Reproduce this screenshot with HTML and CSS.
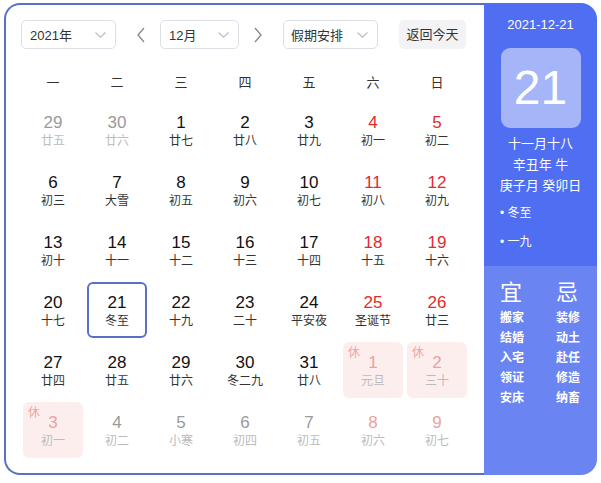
FILE: index.html
```html
<!DOCTYPE html>
<html lang="zh-CN">
<head>
<meta charset="utf-8">
<link rel="stylesheet" href="styles.css">
</head>
<body>
<div class="card">
  <div class="main">
    <div class="controls">
      <div class="select sel-year"><span>2021年</span><svg class="chev" width="11" height="6" viewBox="0 0 11 6"><polyline points="0.5,0.5 5.5,5.2 10.5,0.5" fill="none" stroke="#b8bcc4" stroke-width="1.1"/></svg></div>
      <svg class="arrow arrow-l" width="10" height="16" viewBox="0 0 10 16"><polyline points="8,1 2,8 8,15" fill="none" stroke="#888" stroke-width="1.3"/></svg>
      <div class="select sel-month"><span>12月</span><svg class="chev" width="11" height="6" viewBox="0 0 11 6"><polyline points="0.5,0.5 5.5,5.2 10.5,0.5" fill="none" stroke="#b8bcc4" stroke-width="1.1"/></svg></div>
      <svg class="arrow arrow-r" width="10" height="16" viewBox="0 0 10 16"><polyline points="2,1 8,8 2,15" fill="none" stroke="#888" stroke-width="1.3"/></svg>
      <div class="select sel-hol"><span>假期安排</span><svg class="chev" width="11" height="6" viewBox="0 0 11 6"><polyline points="0.5,0.5 5.5,5.2 10.5,0.5" fill="none" stroke="#b8bcc4" stroke-width="1.1"/></svg></div>
      <div class="btn">返回今天</div>
    </div>
    <div class="weekdays">
      <span>一</span><span>二</span><span>三</span><span>四</span><span>五</span><span>六</span><span>日</span>
    </div>
    <div class="grid">
      <div class="cell other"><b>29</b><i>廿五</i></div>
      <div class="cell other"><b>30</b><i>廿六</i></div>
      <div class="cell"><b>1</b><i>廿七</i></div>
      <div class="cell"><b>2</b><i>廿八</i></div>
      <div class="cell"><b>3</b><i>廿九</i></div>
      <div class="cell wk"><b>4</b><i>初一</i></div>
      <div class="cell wk"><b>5</b><i>初二</i></div>

      <div class="cell"><b>6</b><i>初三</i></div>
      <div class="cell"><b>7</b><i>大雪</i></div>
      <div class="cell"><b>8</b><i>初五</i></div>
      <div class="cell"><b>9</b><i>初六</i></div>
      <div class="cell"><b>10</b><i>初七</i></div>
      <div class="cell wk"><b>11</b><i>初八</i></div>
      <div class="cell wk"><b>12</b><i>初九</i></div>

      <div class="cell"><b>13</b><i>初十</i></div>
      <div class="cell"><b>14</b><i>十一</i></div>
      <div class="cell"><b>15</b><i>十二</i></div>
      <div class="cell"><b>16</b><i>十三</i></div>
      <div class="cell"><b>17</b><i>十四</i></div>
      <div class="cell wk"><b>18</b><i>十五</i></div>
      <div class="cell wk"><b>19</b><i>十六</i></div>

      <div class="cell"><b>20</b><i>十七</i></div>
      <div class="cell selected"><b>21</b><i>冬至</i></div>
      <div class="cell"><b>22</b><i>十九</i></div>
      <div class="cell"><b>23</b><i>二十</i></div>
      <div class="cell"><b>24</b><i>平安夜</i></div>
      <div class="cell wk"><b>25</b><i>圣诞节</i></div>
      <div class="cell wk"><b>26</b><i>廿三</i></div>

      <div class="cell"><b>27</b><i>廿四</i></div>
      <div class="cell"><b>28</b><i>廿五</i></div>
      <div class="cell"><b>29</b><i>廿六</i></div>
      <div class="cell"><b>30</b><i>冬二九</i></div>
      <div class="cell"><b>31</b><i>廿八</i></div>
      <div class="cell other hol"><em>休</em><b>1</b><i>元旦</i></div>
      <div class="cell other hol"><em>休</em><b>2</b><i>三十</i></div>

      <div class="cell other hol"><em>休</em><b>3</b><i>初一</i></div>
      <div class="cell other"><b>4</b><i>初二</i></div>
      <div class="cell other"><b>5</b><i>小寒</i></div>
      <div class="cell other"><b>6</b><i>初四</i></div>
      <div class="cell other"><b>7</b><i>初五</i></div>
      <div class="cell other wkn"><b>8</b><i>初六</i></div>
      <div class="cell other wkn"><b>9</b><i>初七</i></div>
    </div>
  </div>
  <div class="side">
    <div class="side-top">
      <div class="side-date">2021-12-21</div>
      <div class="big-day">21</div>
      <div class="lunar">
        <div>十一月十八</div>
        <div>辛丑年 牛</div>
        <div>庚子月 癸卯日</div>
      </div>
      <ul class="terms">
        <li>冬至</li>
        <li>一九</li>
      </ul>
    </div>
    <div class="side-bottom">
      <div class="yiji">
        <div class="col">
          <div class="head">宜</div>
          <div>搬家</div><div>结婚</div><div>入宅</div><div>领证</div><div>安床</div>
        </div>
        <div class="col">
          <div class="head">忌</div>
          <div>装修</div><div>动土</div><div>赴任</div><div>修造</div><div>纳畜</div>
        </div>
      </div>
    </div>
  </div>
</div>
</body>
</html>
```
FILE: styles.css
```css
* { box-sizing: border-box; }
html, body { margin: 0; padding: 0; background: #fff; }
body {
  padding: 3px 4px 0 4px;
  font-family: "Liberation Sans", "Noto Sans CJK SC", sans-serif;
  color: #222;
}
.card {
  display: flex;
  width: 593px;
  height: 472px;
}
.main {
  width: 480px;
  border: 2px solid #5a6fc6;
  border-right: none;
  border-radius: 16px 0 0 16px;
  padding: 15px 0 0 15px;
}
.controls {
  display: flex;
  align-items: center;
  height: 29px;
}
.select {
  height: 29px;
  border: 1px solid #dcdfe6;
  border-radius: 5px;
  display: flex;
  align-items: center;
  justify-content: space-between;
  padding: 0 9px 0 8px;
  font-size: 13px;
  color: #333;
}
.sel-year { width: 95px; }
.sel-month { width: 79px; }
.sel-hol { width: 95px; padding-left: 7px; }
.arrow { display: block; }
.arrow-l { margin: 0 14px 0 20px; }
.arrow-r { margin: 0 20px 0 14px; }
.btn {
  margin-left: 21px;
  width: 67px;
  height: 29px;
  line-height: 29px;
  text-align: center;
  background: #f3f3f5;
  border-radius: 5px;
  font-size: 13px;
  color: #333;
}
.weekdays {
  display: grid;
  grid-template-columns: repeat(7, 60px);
  column-gap: 4px;
  margin: 15px 0 0 2px;
  height: 38px;
  line-height: 38px;
  text-align: center;
  font-size: 13px;
  color: #333;
}
.grid {
  display: grid;
  grid-template-columns: repeat(7, 60px);
  grid-auto-rows: 56px;
  gap: 4px;
  margin-left: 2px;
}
.cell {
  position: relative;
  display: flex;
  flex-direction: column;
  align-items: center;
  padding-top: 10px;
  border-radius: 6px;
}
.cell b {
  font-weight: normal;
  font-size: 17px;
  line-height: 22px;
  color: #111;
}
.cell i {
  font-style: normal;
  font-size: 12px;
  line-height: 14px;
  color: #333;
}
.cell.wk b { color: #e02b2b; }
.cell.other b { color: #9a9a9a; }
.cell.other i { color: #bcbcbc; }
.cell.wkn b, .cell.hol b { color: #e8a2a2; }
.cell.hol { background: #fdeeee; }
.cell em {
  position: absolute;
  left: 5px;
  top: 4px;
  font-style: normal;
  font-size: 12px;
  line-height: 14px;
  color: #f0a4a4;
}
.cell.selected {
  border: 2px solid #5a6fc6;
  padding-top: 8px;
}
.side {
  width: 113px;
  border-radius: 0 16px 16px 0;
  overflow: hidden;
  display: flex;
  flex-direction: column;
  color: #fff;
}
.side-top {
  background: #4f6ef2;
  height: 263px;
  padding-top: 14px;
}
.side-date {
  text-align: center;
  font-size: 13px;
  line-height: 16px;
}
.big-day {
  width: 80px;
  height: 80px;
  margin: 15px auto 0 auto;
  background: #a5b5f8;
  border-radius: 9px;
  text-align: center;
  line-height: 80px;
  font-size: 48px;
}
.lunar {
  margin-top: 5px;
  text-align: center;
  font-size: 13px;
  line-height: 21px;
}
.terms {
  list-style: none;
  margin: 9px 0 0 0;
  padding: 0 0 0 16px;
  font-size: 12px;
  line-height: 16px;
}
.terms li { margin-bottom: 13px; }
.terms li::before { content: "• "; }
.side-bottom {
  flex: 1;
  background: #6a84f2;
  padding: 14px 0 0 16px;
}
.yiji {
  display: grid;
  grid-template-columns: 56px 56px;
}
.col {
  font-size: 12px;
  line-height: 20px;
  font-weight: bold;
}
.col .head {
  font-size: 22px;
  line-height: 26px;
  font-weight: normal;
  margin-bottom: 2px;
}
```
